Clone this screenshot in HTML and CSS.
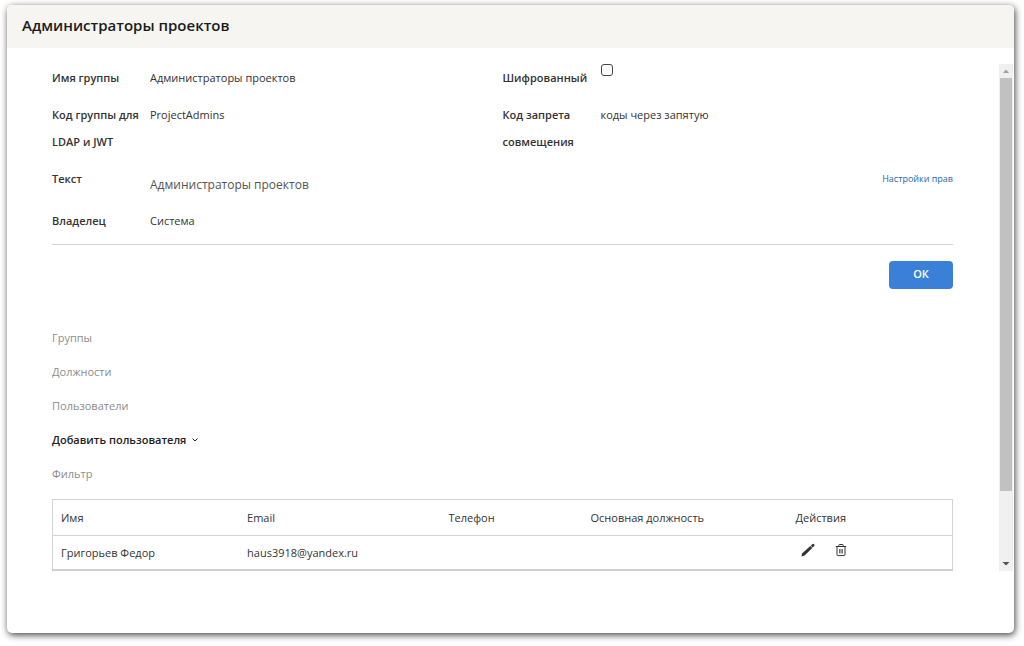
FILE: index.html
```html
<!DOCTYPE html>
<html lang="ru">
<head>
    <meta charset="UTF-8">
    <title>Администраторы проектов</title>
    <link rel="stylesheet" href="styles.css">
</head>
<body>
    <div class="dialog">
        <header class="dialog-header">
            <h1>Администраторы проектов</h1>
        </header>

        <div class="dialog-body">
            <main class="content">
                <form class="group-form">
                    <div class="field">
                        <label for="groupName">Имя группы</label>
                        <input type="text" id="groupName" value="Администраторы проектов">
                    </div>
                    <div class="field">
                        <label for="encrypted">Шифрованный</label>
                        <input type="checkbox" id="encrypted">
                    </div>
                    <div class="field">
                        <label for="groupCode">Код группы для LDAP и JWT</label>
                        <input type="text" id="groupCode" value="ProjectAdmins">
                    </div>
                    <div class="field">
                        <label for="denyCode">Код запрета совмещения</label>
                        <input type="text" id="denyCode" placeholder="коды через запятую">
                    </div>
                    <div class="field">
                        <label for="groupText">Текст</label>
                        <textarea id="groupText" rows="1">Администраторы проектов</textarea>
                    </div>
                    <div class="field field-link">
                        <a href="#">Настройки прав</a>
                    </div>
                    <div class="field">
                        <label for="owner">Владелец</label>
                        <input type="text" id="owner" value="Система">
                    </div>
                    <div class="form-actions">
                        <button type="submit" class="ok-button">ОК</button>
                    </div>
                </form>

                <div class="filters">
                    <input type="text" placeholder="Группы" aria-label="Группы">
                    <input type="text" placeholder="Должности" aria-label="Должности">
                    <input type="text" placeholder="Пользователи" aria-label="Пользователи">
                    <button type="button" class="add-button">
                        Добавить пользователя
                        <svg width="8" height="8" viewBox="0 0 8 8" fill="none" stroke="currentColor">
                            <path d="M1.5 3.5 L4 6 L6.5 3.5"/>
                        </svg>
                    </button>
                    <input type="text" placeholder="Фильтр" aria-label="Фильтр">
                </div>

                <table class="users">
                    <thead>
                        <tr>
                            <th class="col-name">Имя</th>
                            <th class="col-email">Email</th>
                            <th class="col-phone">Телефон</th>
                            <th class="col-post">Основная должность</th>
                            <th>Действия</th>
                        </tr>
                    </thead>
                    <tbody>
                        <tr>
                            <td>Григорьев Федор</td>
                            <td>haus3918@yandex.ru</td>
                            <td></td>
                            <td></td>
                            <td>
                                <div class="row-actions">
                                    <button type="button" aria-label="Изменить">
                                        <svg width="14" height="14" viewBox="0 0 14 14" fill="currentColor">
                                            <path d="M0.3 13.6 L1.3 10.3 L9.3 3 L11.3 5 L3.6 12.5 Z"/>
                                            <path d="M9.8 2.7 L11.2 1.3 Q12.2 0.5 13.2 1.2 Q13.9 2.1 13.2 3.1 L11.7 4.6 Z"/>
                                        </svg>
                                    </button>
                                    <button type="button" aria-label="Удалить">
                                        <svg width="12" height="14" viewBox="0 0 12 14" fill="none" stroke="currentColor">
                                            <path d="M0.8 3.5 H11.2 M3.8 3.5 V2.2 Q3.8 1.5 4.5 1.5 H7.5 Q8.2 1.5 8.2 2.2 V3.5"/>
                                            <path d="M2 3.5 V11.5 Q2 12.6 3.1 12.6 H8.9 Q10 12.6 10 11.5 V3.5"/>
                                            <path d="M4.6 6 V10.4 M6 6 V10.4 M7.4 6 V10.4" stroke-width="0.8"/>
                                        </svg>
                                    </button>
                                </div>
                            </td>
                        </tr>
                    </tbody>
                </table>
            </main>

            <div class="scrollbar" aria-hidden="true">
                <svg class="arrow-up" width="14" height="14" viewBox="0 0 14 14"><path d="M4 9 L7 5.5 L10 9 Z"/></svg>
                <div class="scroll-thumb"></div>
                <svg class="arrow-down" width="14" height="14" viewBox="0 0 14 14"><path d="M3.5 5 H10.5 L7 8.5 Z"/></svg>
            </div>
        </div>
    </div>
</body>
</html>
```

FILE: styles.css
```css
* {
    margin: 0;
    padding: 0;
    box-sizing: border-box;
}

body {
    padding: 5px 10px 12px 7px;
    background: #fff;
    color: #333;
    font-family: "Open Sans", "Noto Sans", sans-serif;
    font-size: 11px;
}

input,
textarea,
button {
    border: none;
    background: none;
    color: inherit;
    font: inherit;
    outline: none;
}

button {
    cursor: pointer;
}

.dialog {
    background: #fff;
    border-radius: 5px;
    box-shadow: 1px 2px 7px rgba(0, 0, 0, 0.75);
    overflow: hidden;
}

.dialog-header {
    padding: 9px 15px 11px;
    background: #f6f5f2;
}

.dialog-header h1 {
    color: #1b1b1b;
    font-size: 15px;
    font-weight: 600;
    line-height: 23px;
}

.dialog-body {
    display: flex;
    padding: 16px 1px 62px 45px;
}

.content {
    flex: 1;
    margin-right: 46px;
}

/* Group form */
.group-form {
    display: grid;
    grid-template-columns: 1fr 1fr;
    row-gap: 10px;
}

.field {
    display: flex;
    align-items: flex-start;
    line-height: 27px;
}

.field label {
    width: 98px;
    padding-right: 10px;
    font-weight: 600;
}

.field input[type="text"] {
    flex: 1;
    height: 27px;
}

.field input::placeholder {
    color: inherit;
}

.field textarea {
    flex: 1;
    height: 32px;
    padding-top: 8px;
    color: #555;
    font-size: 12px;
    line-height: 24px;
    resize: none;
    overflow: hidden;
}

.field input[type="checkbox"] {
    appearance: none;
    width: 12px;
    height: 12px;
    border: 1px solid #444;
    border-radius: 3px;
}

.field-link {
    justify-content: flex-end;
}

.field-link a {
    color: #1d68b0;
    font-size: 9px;
    text-decoration: none;
}

.form-actions {
    grid-column: 1 / -1;
    padding-top: 16px;
    border-top: 1px solid #d4d4d4;
    text-align: right;
}

.ok-button {
    width: 64px;
    height: 28px;
    padding-bottom: 3px;
    border-radius: 4px;
    background: #3a80d9;
    color: #fff;
    font-weight: 600;
}

/* Filters */
.filters {
    display: flex;
    flex-direction: column;
    align-items: flex-start;
    gap: 10px;
    margin: 36px 0 14px;
}

.filters input {
    width: 100%;
    height: 24px;
}

.filters input::placeholder {
    color: #8c8c8c;
}

.add-button {
    display: flex;
    align-items: center;
    gap: 5px;
    height: 24px;
    color: #222;
    font-weight: 600;
}

/* Users table */
.users {
    width: 100%;
    table-layout: fixed;
    border-spacing: 0;
    border: 1px solid #d4d4d4;
    border-bottom: 2px solid #d0d0d0;
}

.users th,
.users td {
    height: 33px;
    padding: 0 8px;
    font-weight: 400;
    text-align: left;
}

.users th {
    height: 36px;
    border-bottom: 1px solid #d4d4d4;
}

.col-name {
    width: 20.7%;
}

.col-email {
    width: 22.4%;
}

.col-phone {
    width: 15.8%;
}

.col-post {
    width: 22.8%;
}

.row-actions {
    display: flex;
    gap: 20px;
    padding: 0 0 5px 6px;
}

.row-actions svg {
    display: block;
}

/* Scrollbar */
.scrollbar {
    display: flex;
    flex-direction: column;
    width: 14px;
    background: #f0f0f0;
}

.scroll-thumb {
    flex: 1;
    margin: 0 1px 66px;
    background: #c1c1c1;
}

.arrow-up {
    fill: #a0a0a0;
}

.arrow-down {
    fill: #505050;
}
```
